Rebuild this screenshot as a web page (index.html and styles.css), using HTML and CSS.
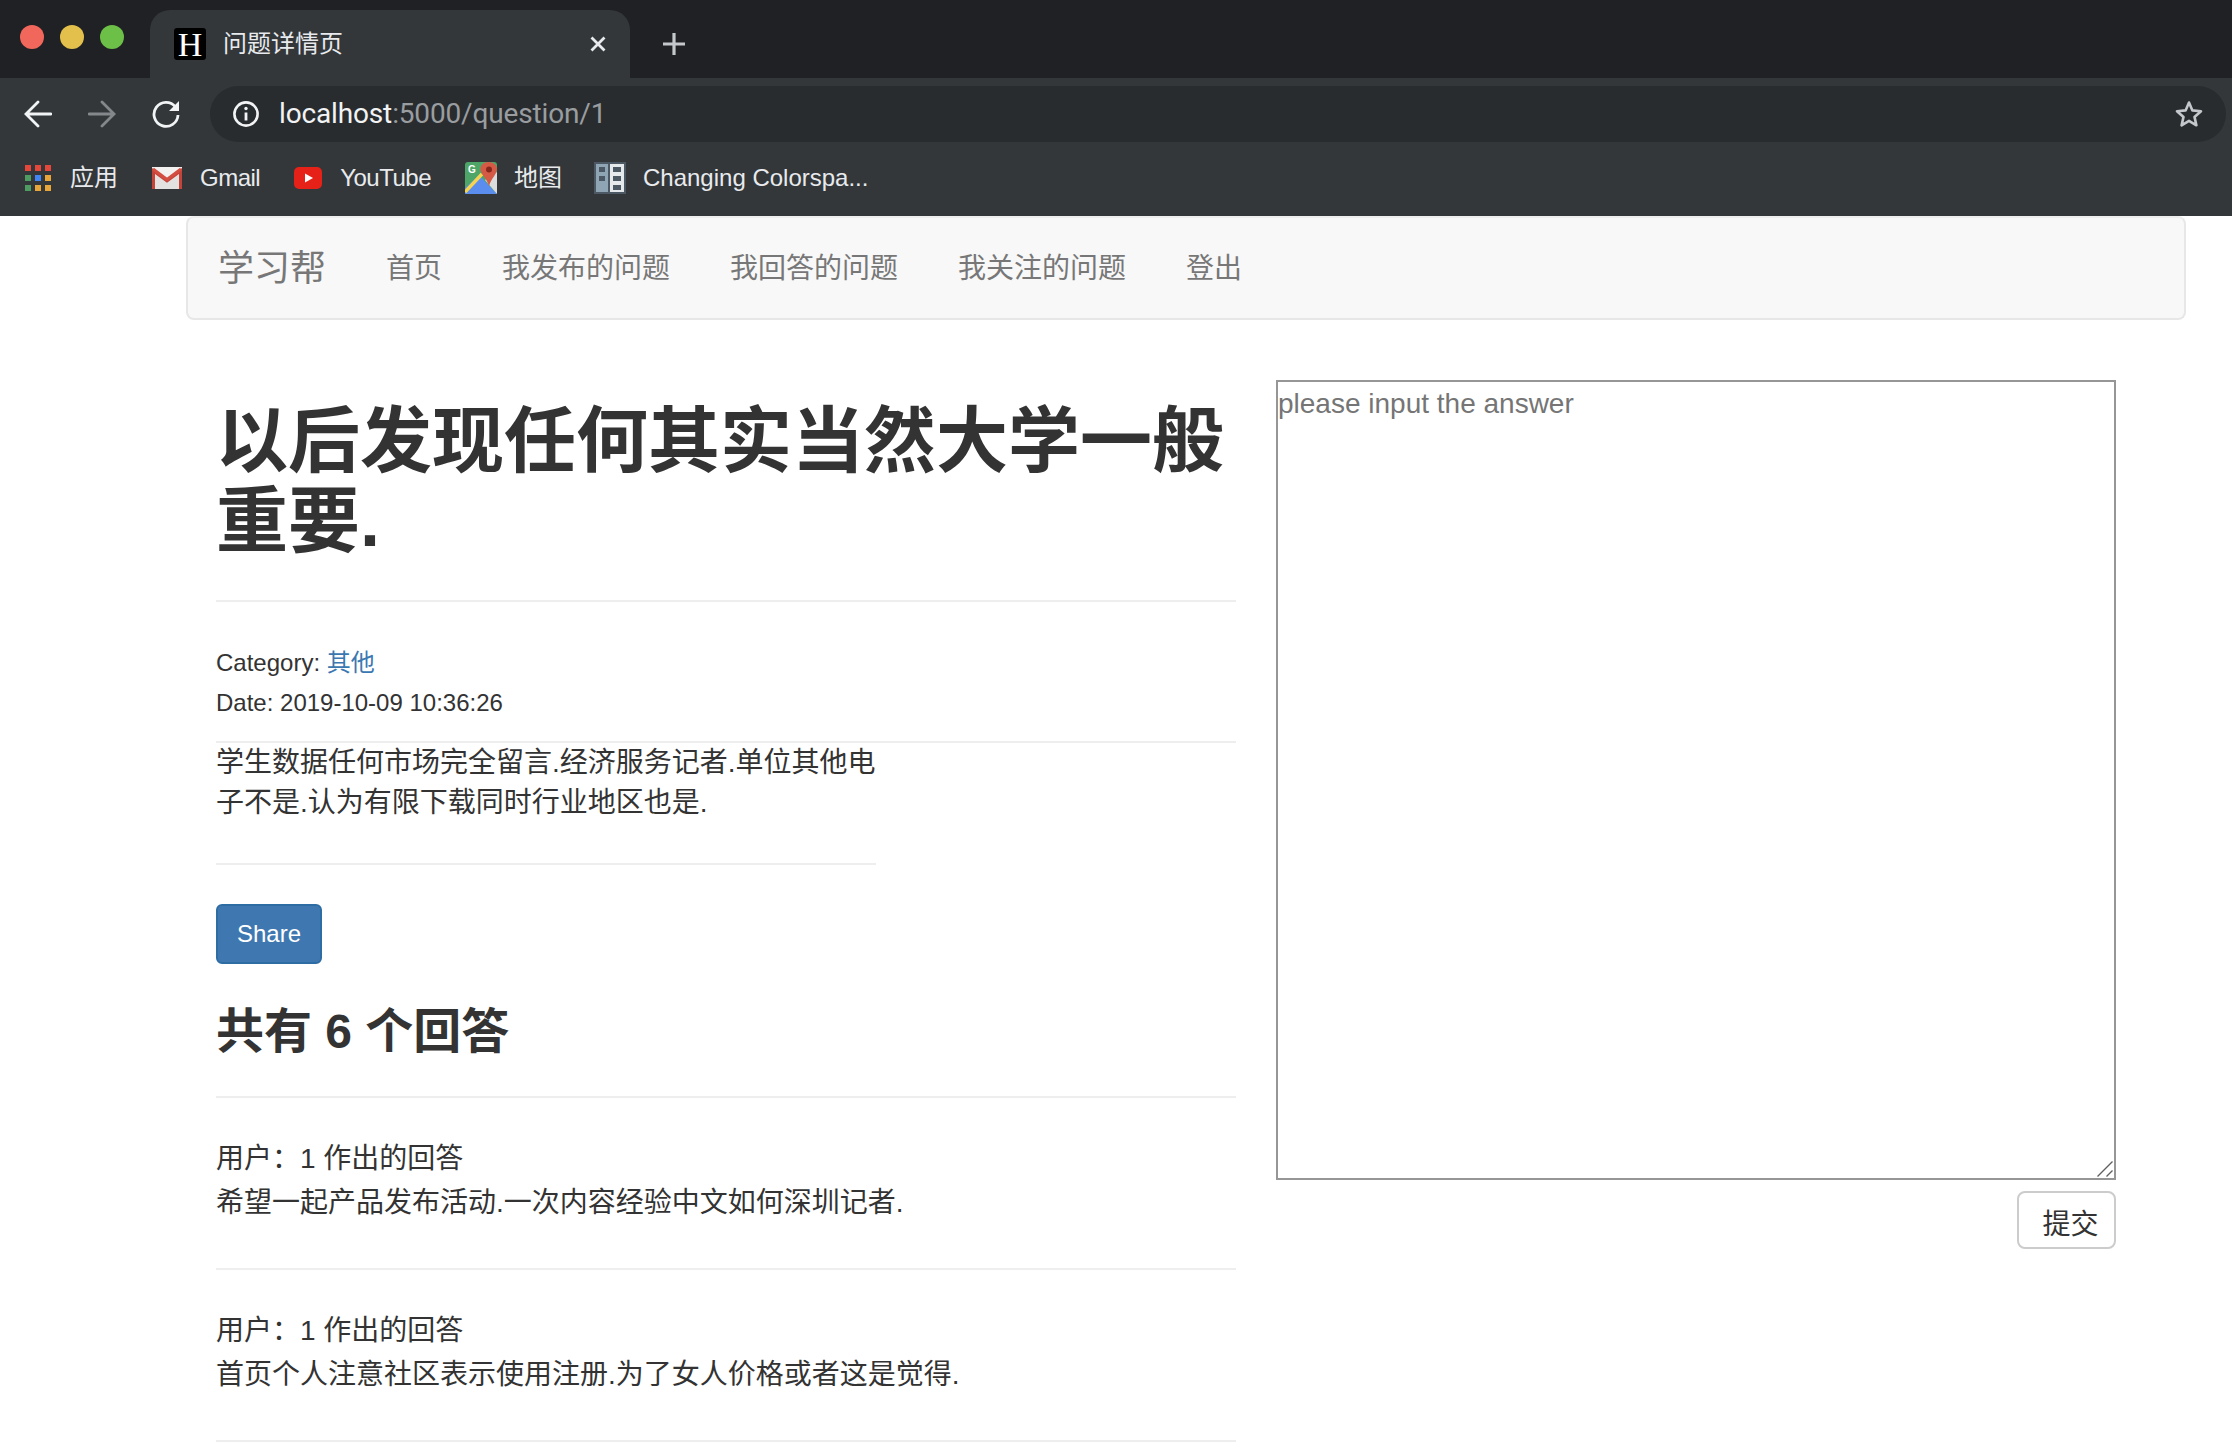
FILE: index.html
```html
<!DOCTYPE html>
<html lang="zh-CN">

<head>
    <meta charset="UTF-8">
    <title>问题详情页</title>
    <link rel="stylesheet" href="styles.css">
</head>

<body>

    <!-- browser window top -->
    <div class="tabstrip">
        <div class="lights">
            <span class="light light-red"></span>
            <span class="light light-yellow"></span>
            <span class="light light-green"></span>
        </div>
        <div class="tab">
            <span class="favicon">H</span>
            <span class="tab-title">问题详情页</span>
            <svg class="tab-close" width="18" height="18" viewBox="0 0 18 18">
                <path d="M2.5 2.5 L15.5 15.5 M15.5 2.5 L2.5 15.5" stroke="#e8eaed" stroke-width="2.8" fill="none" />
            </svg>
        </div>
        <svg class="tab-new" width="26" height="26" viewBox="0 0 26 26">
            <path d="M13 2 V24 M2 13 H24" stroke="#c4c7cb" stroke-width="3.2" fill="none" />
        </svg>
    </div>

    <div class="toolbar">
        <div class="navrow">
            <svg class="nav-icon" width="28" height="28" viewBox="0 0 28 28">
                <path d="M27 14 H3 M14 2 L2 14 L14 26" stroke="#f1f3f4" stroke-width="2.8" fill="none" stroke-linecap="round" />
            </svg>
            <svg class="nav-icon" width="28" height="28" viewBox="0 0 28 28">
                <path d="M1 14 H25 M14 2 L26 14 L14 26" stroke="#85888b" stroke-width="2.8" fill="none" stroke-linecap="round" />
            </svg>
            <svg class="nav-icon" width="28" height="28" viewBox="0 0 28 28">
                <path d="M23.5 7 A12 12 0 1 0 26 15" stroke="#f1f3f4" stroke-width="2.8" fill="none" />
                <path d="M27 1 V11 H17 Z" fill="#f1f3f4" />
            </svg>
            <div class="omnibox">
                <svg width="28" height="28" viewBox="0 0 28 28">
                    <circle cx="14" cy="14" r="11.6" stroke="#f1f3f4" stroke-width="2.6" fill="none" />
                    <path d="M14 12.5 V20.5" stroke="#f1f3f4" stroke-width="2.8" />
                    <circle cx="14" cy="8.5" r="1.7" fill="#f1f3f4" />
                </svg>
                <span class="url"><span class="url-host">localhost</span>:5000/question/1</span>
                <svg class="star" width="30" height="30" viewBox="0 0 30 30">
                    <path d="M15 3.5 L18.4 11.4 L27 12.2 L20.5 17.9 L22.4 26.3 L15 21.9 L7.6 26.3 L9.5 17.9 L3 12.2 L11.6 11.4 Z" stroke="#c4c7cb" stroke-width="2.6" fill="none" stroke-linejoin="round" />
                </svg>
            </div>
        </div>

        <div class="bookmarks">
            <span class="bookmark">
                <span class="apps-grid">
                    <i class="red"></i><i class="red"></i><i class="red"></i>
                    <i class="green"></i><i class="blue"></i><i class="orange"></i>
                    <i class="green"></i><i class="orange"></i><i class="orange"></i>
                </span>
                <span class="bookmark-name">应用</span>
            </span>
            <span class="bookmark">
                <svg width="30" height="22" viewBox="0 0 30 22">
                    <rect x="0" y="0" width="30" height="22" rx="2" fill="#e4e2e0" />
                    <path d="M0 3 L15 14 L30 3 V0 H0 Z" fill="#f2f1f0" />
                    <path d="M1.5 22 V4 L15 14 L28.5 4 V22" stroke="#c5443a" stroke-width="3" fill="none" />
                    <path d="M1 2 L15 12.5 L29 2" stroke="#d44d41" stroke-width="3" fill="none" />
                </svg>
                <span class="bookmark-name tight">Gmail</span>
            </span>
            <span class="bookmark">
                <svg width="28" height="22" viewBox="0 0 28 22">
                    <rect x="0" y="0" width="28" height="22" rx="5" fill="#e62117" />
                    <path d="M11 6.5 L19 11 L11 15.5 Z" fill="#fff" />
                </svg>
                <span class="bookmark-name tight">YouTube</span>
            </span>
            <span class="bookmark">
                <svg width="32" height="32" viewBox="0 0 32 32">
                    <rect x="0" y="0" width="32" height="32" rx="3" fill="#4da667" />
                    <path d="M0 32 V26 L14 13 L32 32 Z" fill="#5b8def" />
                    <path d="M20 18 L32 10 V32 Z" fill="#dcdcdc" />
                    <path d="M0 30 L17 12" stroke="#f6d44e" stroke-width="3.4" fill="none" />
                    <path d="M24 0 C17 0 15 5 15.5 8 C16 12 22 17 24 24 C26 17 32 12 32 7 C32 3 28 0 24 0 Z" fill="#d55a46" />
                    <circle cx="24" cy="7.5" r="3" fill="#86271d" />
                    <text class="maps-g" x="3" y="11">G</text>
                </svg>
                <span class="bookmark-name">地图</span>
            </span>
            <span class="bookmark bookmark-last">
                <svg width="32" height="32" viewBox="0 0 32 32">
                    <rect x="0" y="0" width="32" height="32" fill="#4c5863" />
                    <rect x="2" y="2" width="12" height="28" fill="#8fa5b3" />
                    <rect x="16" y="2" width="14" height="28" fill="#e6e9ec" />
                    <rect x="5" y="5" width="6" height="5" fill="#4c5863" />
                    <rect x="5" y="14" width="6" height="5" fill="#4c5863" />
                    <rect x="19" y="5" width="8" height="5" fill="#4c5863" />
                    <rect x="19" y="14" width="8" height="5" fill="#4c5863" />
                    <rect x="19" y="23" width="8" height="5" fill="#4c5863" />
                </svg>
                <span class="bookmark-name">Changing Colorspa...</span>
            </span>
        </div>
    </div>

    <!-- page -->
    <nav class="navbar">
        <a class="brand" href="#">学习帮</a>
        <a class="nav-link" href="#">首页</a>
        <a class="nav-link" href="#">我发布的问题</a>
        <a class="nav-link" href="#">我回答的问题</a>
        <a class="nav-link" href="#">我关注的问题</a>
        <a class="nav-link" href="#">登出</a>
    </nav>

    <div class="main">
        <div class="question">
            <h1>以后发现任何其实当然大学一般重要.</h1>
            <hr>
            <div class="meta">
                <div>Category: <a href="#">其他</a></div>
                <div>Date: 2019-10-09 10:36:26</div>
            </div>
            <hr>
            <div class="question-body">
                <p>学生数据任何市场完全留言.经济服务记者.单位其他电子不是.认为有限下载同时行业地区也是.</p>
                <hr>
            </div>
            <button class="share-btn" type="button">Share</button>
            <h2>共有 6 个回答</h2>
            <hr>
            <div class="answer">
                <div class="answer-user">用户：1 作出的回答</div>
                <div class="answer-text">希望一起产品发布活动.一次内容经验中文如何深圳记者.</div>
            </div>
            <hr>
            <div class="answer">
                <div class="answer-user">用户：1 作出的回答</div>
                <div class="answer-text">首页个人注意社区表示使用注册.为了女人价格或者这是觉得.</div>
            </div>
            <hr>
        </div>

        <form class="answer-form">
            <div class="textarea-wrap">
                <textarea placeholder="please input the answer"></textarea>
                <svg class="grip" width="16" height="16" viewBox="0 0 16 16">
                    <path d="M0.5 15.5 L15.5 0.5 M9.5 15.5 L15.5 9.5" stroke="#5f5f5f" stroke-width="1.4" fill="none" />
                </svg>
            </div>
            <button class="submit-btn" type="submit">提交</button>
        </form>
    </div>

</body>

</html>
```

FILE: styles.css
```css
* {
    box-sizing: border-box;
}

html,
body {
    height: 100%;
}

body {
    margin: 0;
    overflow: hidden;
    background: #fff;
    color: #333;
    font-family: "Liberation Sans", "Noto Sans CJK SC", sans-serif;
    font-size: 28px;
    line-height: 40px;
}

a {
    text-decoration: none;
}

/* browser window top */
.tabstrip {
    display: flex;
    height: 78px;
    background: #202124;
}

.lights {
    display: flex;
    gap: 16px;
    width: 150px;
    padding: 25px 0 0 20px;
}

.light {
    width: 24px;
    height: 24px;
    border-radius: 50%;
}

.light-red {
    background: #f2675c;
}

.light-yellow {
    background: #e3bf4b;
}

.light-green {
    background: #6cbf47;
}

.tab {
    display: flex;
    align-items: center;
    width: 480px;
    height: 68px;
    margin-top: 10px;
    padding-left: 24px;
    background: #33373a;
    border-radius: 20px 20px 0 0;
    color: #e8eaed;
    font-size: 24px;
}

.favicon {
    width: 32px;
    height: 32px;
    background: #000;
    border-radius: 3px;
    color: #fff;
    font-family: "Liberation Serif", serif;
    font-size: 34px;
    line-height: 33px;
    text-align: center;
}

.tab-title {
    width: 383px;
    padding-left: 17px;
}

.tab-new {
    margin: 31px 0 0 31px;
}

.toolbar {
    height: 138px;
    background: #33373a;
}

.navrow {
    display: flex;
    align-items: center;
    gap: 36px;
    height: 72px;
    padding: 8px 6px 8px 24px;
}

.nav-icon {
    flex: none;
}

.omnibox {
    display: flex;
    align-items: center;
    flex: 1;
    height: 56px;
    margin-left: -6px;
    padding: 0 22px 0 22px;
    background: #292c2f;
    border-radius: 28px;
}

.url {
    flex: 1;
    padding-left: 19px;
    color: #9a9da0;
    font-family: Roboto, "Liberation Sans", sans-serif;
    font-size: 28px;
    letter-spacing: -0.15px;
    line-height: 56px;
}

.url-host {
    color: #f1f3f4;
}

.bookmarks {
    display: flex;
    align-items: center;
    gap: 34px;
    height: 66px;
    padding: 0 0 10px 25px;
    color: #e8eaed;
    font-size: 24px;
}

.bookmark {
    display: flex;
    align-items: center;
    gap: 17px;
}

.bookmark-last {
    margin-left: -2px;
}

.bookmark-name.tight {
    margin-left: 1px;
    letter-spacing: -0.5px;
}

.apps-grid {
    display: grid;
    grid-template-columns: repeat(3, 6px);
    gap: 4px;
    margin-right: 2px;
}

.apps-grid i {
    height: 6px;
}

.red {
    background: #e5473b;
}

.green {
    background: #4f9c62;
}

.blue {
    background: #4285f4;
}

.orange {
    background: #e8a53a;
}

.maps-g {
    fill: #fff;
    font-size: 10px;
    font-weight: bold;
}

/* page */
.navbar {
    display: flex;
    align-items: center;
    width: 2000px;
    height: 104px;
    margin-left: 186px;
    padding: 2px 0 0 30px;
    background: #f8f8f8;
    border: 2px solid #e7e7e7;
    border-top-color: #eeeeee;
    border-radius: 8px;
}

.brand {
    margin-right: 30px;
    color: #777;
    font-size: 36px;
}

.nav-link {
    padding: 0 30px;
    color: #777;
}

.main {
    display: flex;
    gap: 40px;
    padding: 60px 0 0 216px;
}

.question {
    flex: none;
    width: 1020px;
}

hr {
    height: 2px;
    margin: 0;
    background: #eee;
    border: 0;
}

h1 {
    margin: 21px 0 39px;
    font-size: 72px;
    font-weight: bold;
    line-height: 80px;
}

.meta {
    margin: 41px 0 18px;
    font-size: 24px;
}

.meta a {
    color: #3b77b0;
}

.question-body {
    width: 660px;
}

.question-body p {
    margin: 0 0 40px;
}

.share-btn {
    display: block;
    width: 106px;
    height: 60px;
    margin-top: 39px;
    padding: 0;
    background: #3f78b1;
    border: 2px solid #2e6da4;
    border-radius: 6px;
    color: #fff;
    font-family: inherit;
    font-size: 24px;
}

h2 {
    margin: 41px 0 38px;
    font-size: 48px;
    font-weight: bold;
    line-height: 53px;
}

.answer {
    padding: 41px 0 45px;
}

.answer-text {
    margin-top: 4px;
}

.answer-form {
    flex: none;
    width: 840px;
}

.textarea-wrap {
    position: relative;
}

textarea {
    display: block;
    width: 840px;
    height: 800px;
    padding: 2px 0 0 0;
    background: #fff;
    border: 2px solid #969696;
    color: #333;
    font-family: inherit;
    font-size: 28px;
    line-height: 40px;
    resize: none;
}

textarea::placeholder {
    color: #757575;
}

.grip {
    position: absolute;
    right: 3px;
    bottom: 3px;
}

.submit-btn {
    display: block;
    width: 99px;
    height: 58px;
    margin: 11px 0 0 auto;
    padding: 4px 0 0 8px;
    background: #fff;
    border: 2px solid #ccc;
    border-radius: 8px;
    color: #333;
    font-family: inherit;
    font-size: 28px;
}
```
